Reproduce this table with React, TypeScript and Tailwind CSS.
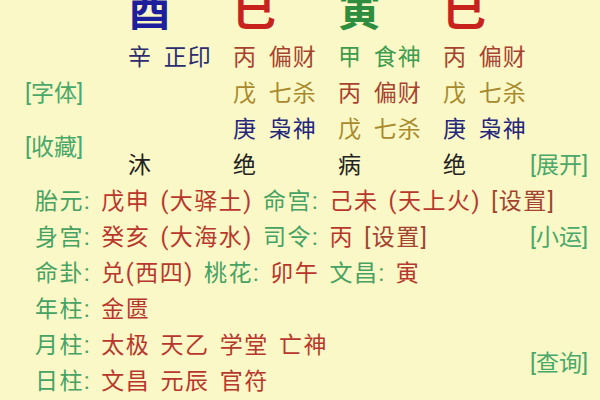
const FONT = 'font-["Roboto","Noto_Sans_CJK_SC",sans-serif]'

const LABEL = 'text-[#46a262]'
const VALUE = 'text-[#b8372c]'
const LINK = 'text-[#4aa86a]'
const SET = 'text-[#a4432f]'

const pillars = [
  { ch: '酉', color: 'text-[#1d1f9c]' },
  { ch: '巳', color: 'text-[#c8221d]' },
  { ch: '寅', color: 'text-[#2f8d40]' },
  { ch: '巳', color: 'text-[#c8221d]' },
]

const BING = 'text-[#a8422f]'
const WU = 'text-[#a88a2c]'
const GENG = 'text-[#25257c]'

// hidden stems, one row per level
const hidden = [
  [
    { t: '辛 正印', c: 'text-[#2c2c6e]' },
    { t: '丙 偏财', c: BING },
    { t: '甲 食神', c: 'text-[#3e9c4e]' },
    { t: '丙 偏财', c: BING },
  ],
  [
    null,
    { t: '戊 七杀', c: WU },
    { t: '丙 偏财', c: BING },
    { t: '戊 七杀', c: WU },
  ],
  [
    null,
    { t: '庚 枭神', c: GENG },
    { t: '戊 七杀', c: WU },
    { t: '庚 枭神', c: GENG },
  ],
]

const stages = ['沐', '绝', '病', '绝']

const ROW = 'pl-[35px] whitespace-nowrap tracking-[1.5px] [word-spacing:3px]'

function Seg({ label, value }: { label: string; value: string }) {
  return (
    <>
      <span className={LABEL}>{label}</span> <span className={VALUE}>{value}</span>
    </>
  )
}

export default function App() {
  return (
    <div className={`w-[600px] h-[400px] overflow-hidden bg-[#fbf8c7] ${FONT}`}>
      <div className="grid grid-cols-[128px_105px_105px_105px_87px_1fr] grid-rows-[50px_repeat(10,36px)] -mt-[10px] text-[23px] leading-[36px]">
        {/* pillars */}
        <div />
        {pillars.map((p, i) => (
          <div key={i} className={`text-[43px] leading-[42px] font-bold ${p.color}`}>
            {p.ch}
          </div>
        ))}
        <div />

        {/* hidden stems */}
        {hidden.map((row, r) => (
          <div key={r} className="contents">
            {r === 0 && <div />}
            {r === 1 && <div className={`pl-[25px] ${LINK}`}>[字体]</div>}
            {r === 2 && (
              <div className={`row-span-2 pl-[25px] self-center ${LINK}`}>[收藏]</div>
            )}
            {row.map((cell, i) => (
              <div
                key={i}
                className={`whitespace-nowrap tracking-[1px] [word-spacing:5px] ${cell?.c ?? ''}`}
              >
                {cell?.t}
              </div>
            ))}
            <div />
          </div>
        ))}

        {/* growth stages */}
        {stages.map((s, i) => (
          <div key={i} className={`text-[#222222] ${i === 0 ? 'col-start-2' : ''}`}>
            {s}
          </div>
        ))}
        <div className={LINK}>[展开]</div>

        {/* details */}
        <div className={`col-span-6 ${ROW}`}>
          <Seg label="胎元:" value="戊申 (大驿土)" /> <Seg label="命宫:" value="己未 (天上火)" />{' '}
          <span className={SET}>[设置]</span>
        </div>

        <div className={`col-span-5 ${ROW}`}>
          <Seg label="身宫:" value="癸亥 (大海水)" /> <Seg label="司令:" value="丙" />{' '}
          <span className={SET}>[设置]</span>
        </div>
        <div className={LINK}>[小运]</div>

        <div className={`col-span-6 ${ROW}`}>
          <Seg label="命卦:" value="兑(西四)" /> <Seg label="桃花:" value="卯午" />{' '}
          <Seg label="文昌:" value="寅" />
        </div>

        <div className={`col-span-6 ${ROW}`}>
          <Seg label="年柱:" value="金匮" />
        </div>

        <div className={`col-span-5 ${ROW}`}>
          <Seg label="月柱:" value="太极 天乙 学堂 亡神" />
        </div>
        <div className={`row-span-2 self-center ${LINK}`}>[查询]</div>

        <div className={`col-span-5 ${ROW}`}>
          <Seg label="日柱:" value="文昌 元辰 官符" />
        </div>
      </div>
    </div>
  )
}
